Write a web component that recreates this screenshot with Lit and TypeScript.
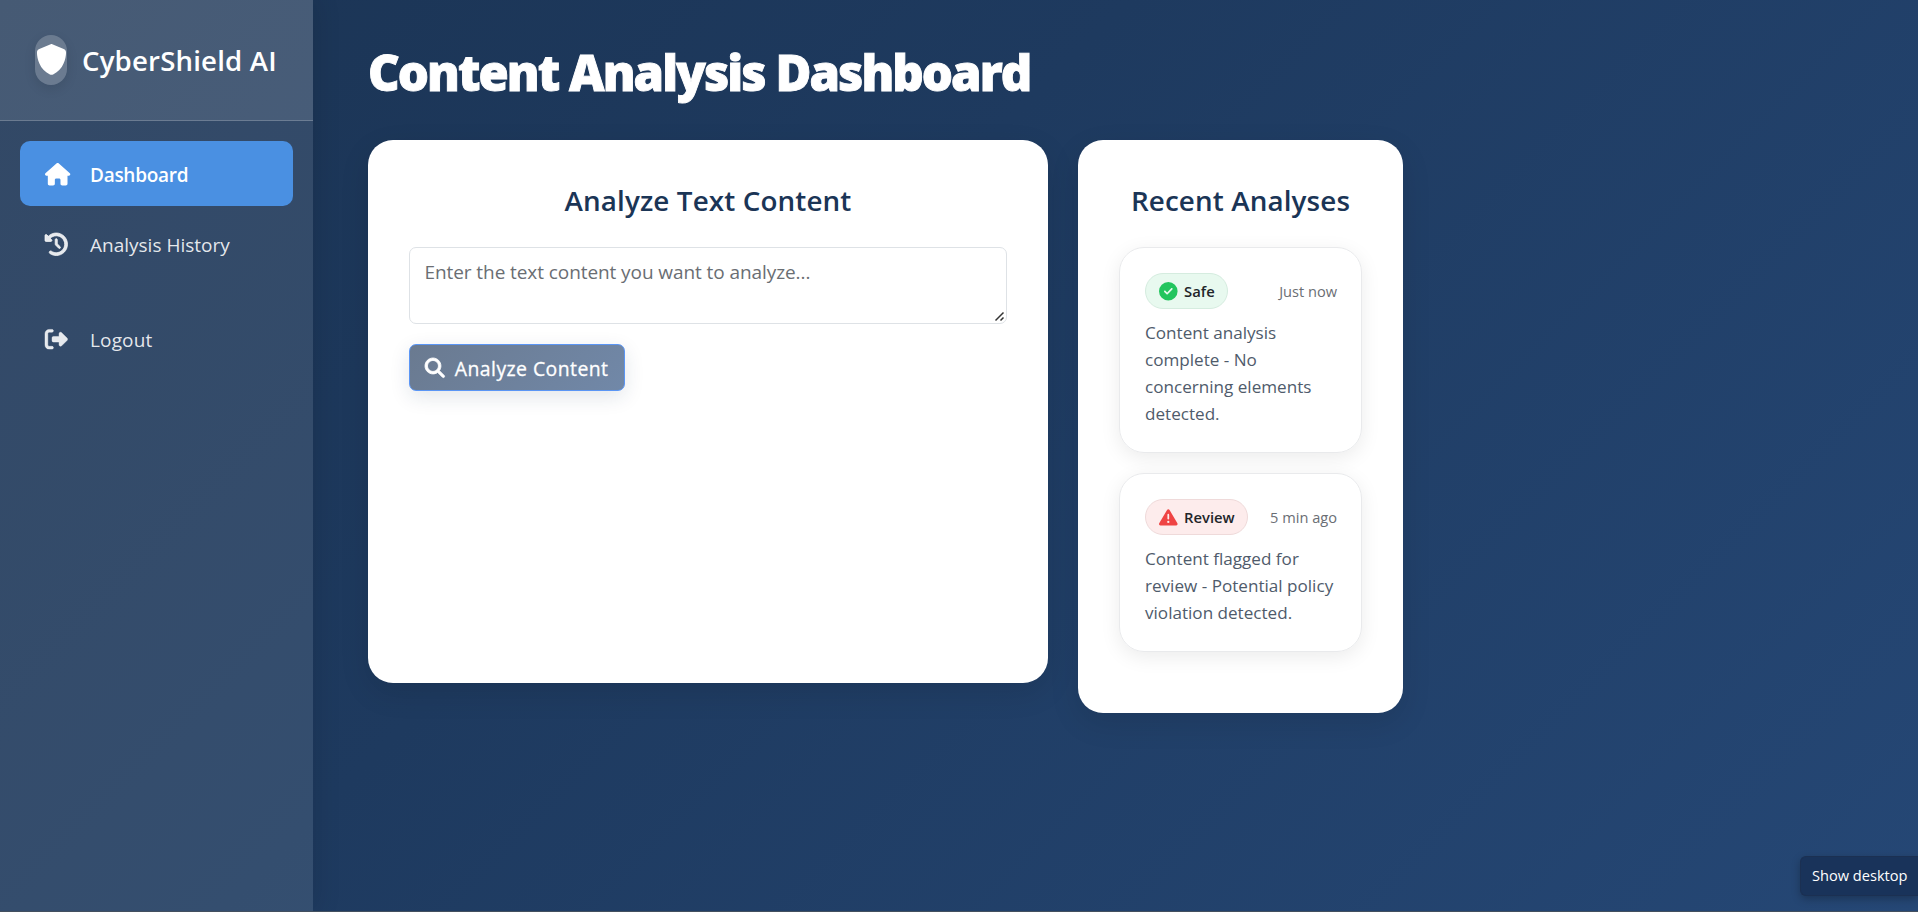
import { LitElement, html, css, svg } from "lit";
import { customElement, property } from "lit/decorators.js";

const ICONS: Record<string, { w: number; d: string; bold?: number }> = {
  shield: { w: 512, d: "M256 0c4.6 0 9.2 1 13.4 2.9L457.7 82.8c22 9.3 38.4 31 38.3 57.2c-.5 99.2-41.3 280.7-213.6 363.2c-16.7 8-36.1 8-52.8 0C57.3 420.7 16.5 239.2 16 140c-.1-26.2 16.3-47.9 38.3-57.2L242.7 2.9C246.8 1 251.4 0 256 0z" },
  home: { w: 576, d: "M575.8 255.5c0 18-15 32.1-32 32.1h-32l.7 160.2c0 2.7-.2 5.4-.5 8.1V472c0 22.1-17.9 40-40 40H456c-1.1 0-2.2 0-3.3-.1c-1.4 .1-2.8 .1-4.2 .1H416 392c-22.1 0-40-17.9-40-40V448 384c0-17.7-14.3-32-32-32H256c-17.7 0-32 14.3-32 32v64 24c0 22.1-17.9 40-40 40H160 128.1c-1.5 0-3-.1-4.5-.2c-1.2 .1-2.4 .2-3.6 .2H104c-22.1 0-40-17.9-40-40V360c0-.9 0-1.9 .1-2.8V287.6H32c-18 0-32-14-32-32.1c0-9 3-17 10-24L266.4 8c7-7 15-8 22-8s15 2 21 7L564.8 231.5c8 7 12 15 11 24z" },
  history: { w: 512, bold: 18, d: "M75 75L41 41C25.9 25.9 0 36.6 0 57.9V168c0 13.3 10.7 24 24 24H134.1c21.4 0 32.1-25.9 17-41l-30.8-30.8C155 85.5 203 64 256 64c106 0 192 86 192 192s-86 192-192 192c-40.8 0-78.6-12.7-109.7-34.4c-14.5-10.1-34.4-6.6-44.6 7.9s-6.6 34.4 7.9 44.6C151.2 495 201.7 512 256 512c141.4 0 256-114.6 256-256S397.4 0 256 0C185.3 0 121.3 28.7 75 75zm181 53c-13.3 0-24 10.7-24 24V256c0 6.4 2.5 12.5 7 17l72 72c9.4 9.4 24.6 9.4 33.9 0s9.4-24.6 0-33.9l-65-65V152c0-13.3-10.7-24-24-24z" },
  logout: { w: 512, bold: 10, d: "M377.9 105.9L500.7 228.7c7.2 7.2 11.3 17.1 11.3 27.3s-4.1 20.1-11.3 27.3L377.9 406.1c-6.4 6.4-15 9.9-24 9.9c-18.7 0-33.9-15.2-33.9-33.9l0-62.1-128 0c-17.7 0-32-14.3-32-32l0-64c0-17.7 14.3-32 32-32l128 0 0-62.1c0-18.7 15.2-33.9 33.9-33.9c9 0 17.6 3.6 24 9.9zM160 96L96 96c-17.7 0-32 14.3-32 32l0 256c0 17.7 14.3 32 32 32l64 0c17.7 0 32 14.3 32 32s-14.3 32-32 32l-64 0c-53 0-96-43-96-96L0 128C0 75 43 32 96 32l64 0c17.7 0 32 14.3 32 32s-14.3 32-32 32z" },
  search: { w: 512, bold: 22, d: "M416 208c0 45.9-14.9 88.3-40 122.7L502.6 457.4c12.5 12.5 12.5 32.8 0 45.3s-32.8 12.5-45.3 0L330.7 376c-34.4 25.2-76.8 40-122.7 40C93.1 416 0 322.9 0 208S93.1 0 208 0S416 93.1 416 208zM208 352a144 144 0 1 0 0-288 144 144 0 1 0 0 288z" },
  check: { w: 512, d: "M256 512A256 256 0 1 0 256 0a256 256 0 1 0 0 512zM369 209L241 337c-9.4 9.4-24.6 9.4-33.9 0l-64-64c-9.4-9.4-9.4-24.6 0-33.9s24.6-9.4 33.9 0l47 47L335 175c9.4-9.4 24.6-9.4 33.9 0s9.4 24.6 0 33.9z" },
  warning: { w: 512, d: "M256 32c14.2 0 27.3 7.5 34.5 19.8l216 368c7.3 12.4 7.3 27.7 .2 40.1S486.3 480 472 480H40c-14.3 0-27.6-7.7-34.7-20.1s-7-27.8 .2-40.1l216-368C228.7 39.5 241.8 32 256 32zm0 128c-13.3 0-24 10.7-24 24V296c0 13.3 10.7 24 24 24s24-10.7 24-24V184c0-13.3-10.7-24-24-24zm32 224a32 32 0 1 0 -64 0 32 32 0 1 0 64 0z" },
};

@customElement("fa-icon")
class FaIcon extends LitElement {
  @property() name = "home";
  static styles = css`
    :host { display: inline-flex; flex: none; }
    .glyph { height: 1em; width: auto; display: block; fill: currentColor; stroke: currentColor; overflow: visible; }
  `;
  render() {
    const i = ICONS[this.name];
    return html`<svg class="glyph" viewBox="0 0 ${i.w} 512">${svg`<path stroke-width=${i.bold ?? 0} d=${i.d}></path>`}</svg>`;
  }
}

@customElement("app-root")
class AppRoot extends LitElement {
  static styles = css`
    :host {
      display: block; height: 912px; box-sizing: border-box; overflow: hidden; position: relative;
      font-family: "Open Sans", "Noto Sans", sans-serif;
      background: linear-gradient(135deg, #1b3454 0%, #1e3a5f 40%, #254775 100%);
      border-bottom: 1px solid #43505f;
    }
    * { box-sizing: border-box; }
    h1, h2, p { margin: 0; }
    .layout { display: flex; height: 100%; }
    .sidebar {
      width: 313px; flex: none; color: #fff;
      background: rgba(255, 255, 255, 0.1);
      box-shadow: 4px 0 24px rgba(0, 0, 0, 0.1);
    }
    .brand {
      height: 121px; display: flex; align-items: center; padding: 0 0 1px 35px; gap: 15px;
      background: rgba(255, 255, 255, 0.1); border-bottom: 1px solid rgba(255, 255, 255, 0.2);
    }
    .crest {
      width: 32px; height: 50px; border-radius: 16px; display: flex; align-items: center; justify-content: center;
      background: rgba(255, 255, 255, 0.2); box-shadow: 0 4px 12px rgba(0, 0, 0, 0.1); font-size: 31px;
    }
    .brand-name { font-size: 27.6px; font-weight: 600; line-height: 40px; letter-spacing: 0.18px; white-space: nowrap; }
    .nav { padding: 20px; display: flex; flex-direction: column; gap: 5px; }
    .item { height: 65px; border-radius: 10px; display: flex; align-items: center; padding-left: 25px; color: rgba(255, 255, 255, 0.88); font-size: 19px; white-space: nowrap; }
    .label { padding-top: 2px; }
    .item.active { background: #4a90e2; color: #fff; font-weight: 600; letter-spacing: -0.28px; }
    .item.last { margin-top: 25px; letter-spacing: 0.15px; }
    .slot { width: 45px; display: flex; font-size: 22.5px; padding-top: 1px; }
    .main { flex: 1; padding: 45px 0 0 55px; min-width: 0; }
    .title { color: #fff; font-size: 49px; font-weight: 800; line-height: 54px; letter-spacing: -1.96px; -webkit-text-stroke: 0.9px #fff; white-space: nowrap; }
    .cards { display: flex; align-items: flex-start; gap: 30px; margin-top: 41px; }
    .card { background: #fff; border-radius: 25px; padding: 40px 41px; box-shadow: 0 10px 30px rgba(0, 0, 0, 0.1); }
    .analyze { width: 680px; height: 543px; }
    .recent { width: 325px; height: 573px; }
    .heading { color: #1b3556; font-size: 27.8px; font-weight: 600; line-height: 40px; letter-spacing: 0.12px; text-align: center; white-space: nowrap; }
    .field { display: flex; position: relative; margin-top: 27px; }
    .input {
      display: block; width: 598px; height: 77px; border: 1px solid #dee2e6; border-radius: 7px; letter-spacing: -0.08px;
      padding: 9px 14.5px; font: 19px/30px "Open Sans", sans-serif; background: #fff; outline: none; resize: none;
    }
    .input::placeholder { color: #6a6e73; opacity: 1; }
    .grip { position: absolute; right: 2px; bottom: 2px; width: 11px; height: 11px; stroke: #333; stroke-width: 1.5; fill: none; }
    .button {
      width: 216px; height: 47px; margin-top: 20px; border: 1px solid #5b96f5; border-radius: 7px; color: #fff;
      display: flex; align-items: center; gap: 10.2px; padding: 0 0 0 15px; letter-spacing: 0.45px;
      background: linear-gradient(135deg, #6a7a90, #7188a8); box-shadow: 0 6px 20px rgba(27, 53, 86, 0.12);
      font: 500 19.4px/30px "Open Sans", sans-serif; white-space: nowrap;
    }
    .button .label { -webkit-text-stroke: 0.3px #fff; }
    .button fa-icon { font-size: 19.6px; padding-top: 1px; }
    .list { display: flex; flex-direction: column; gap: 20px; margin-top: 27px; }
    .entry { border: 1px solid #e9eaec; border-radius: 25px; padding: 25px 24px 25px 25px; box-shadow: 0 5px 20px rgba(0, 0, 0, 0.08); }
    .row { display: flex; align-items: center; justify-content: space-between; }
    .badge {
      height: 36px; border-radius: 18px; display: flex; align-items: center; gap: 7px; padding: 0 12.5px;
      font-size: 14.8px; font-weight: 600; color: #212529; white-space: nowrap;
    }
    .badge fa-icon { font-size: 18.6px; }
    .badge.safe { background: #e8f9ef; border: 1px solid #d5ecdf; }
    .badge.review { background: #fdecec; border: 1px solid #efdada; }
    .safe fa-icon { color: #22c55e; }
    .review fa-icon { color: #ef4444; }
    .time { font-size: 14.6px; color: #6a6e74; white-space: nowrap; }
    .text { font-size: 17.1px; line-height: 27px; color: #4f5b6b; margin-top: 10px; white-space: nowrap; }
    .tip {
      position: absolute; right: 0; bottom: 15px; width: 118px; height: 40px; border-radius: 6px 0 0 6px; color: #fff;
      display: flex; align-items: center; padding: 0 0 2px 11px; font-size: 14.6px; white-space: nowrap;
      background: #19335a; border: 1px solid #1b3052; border-right: 0; box-shadow: 0 3px 8px rgba(0, 0, 0, 0.25);
    }
  `;
  render() {
    return html`
      <div class="layout">
        <aside class="sidebar">
          <div class="brand"><span class="crest"><fa-icon name="shield"></fa-icon></span><span class="brand-name">CyberShield AI</span></div>
          <nav class="nav">
            <a class="item active"><span class="slot"><fa-icon name="home"></fa-icon></span><span class="label">Dashboard</span></a>
            <a class="item"><span class="slot"><fa-icon name="history"></fa-icon></span><span class="label">Analysis History</span></a>
            <a class="item last"><span class="slot"><fa-icon name="logout"></fa-icon></span><span class="label">Logout</span></a>
          </nav>
        </aside>
        <main class="main">
          <h1 class="title">Content Analysis Dashboard</h1>
          <div class="cards">
            <section class="card analyze">
              <h2 class="heading">Analyze Text Content</h2>
              <div class="field">
                <textarea class="input" placeholder="Enter the text content you want to analyze..."></textarea>
                <svg class="grip" viewBox="0 0 11 11"><path d="M1.5 9.5L9.5 1.5M6.5 9.5L9.5 6.5"></path></svg>
              </div>
              <button class="button"><fa-icon name="search"></fa-icon><span class="label">Analyze Content</span></button>
            </section>
            <section class="card recent">
              <h2 class="heading">Recent Analyses</h2>
              <div class="list">
                <article class="entry">
                  <div class="row"><span class="badge safe"><fa-icon name="check"></fa-icon><span>Safe</span></span><span class="time">Just now</span></div>
                  <p class="text">Content analysis<br />complete - No<br />concerning elements<br />detected.</p>
                </article>
                <article class="entry">
                  <div class="row"><span class="badge review"><fa-icon name="warning"></fa-icon><span>Review</span></span><span class="time">5 min ago</span></div>
                  <p class="text">Content flagged for<br />review - Potential policy<br />violation detected.</p>
                </article>
              </div>
            </section>
          </div>
        </main>
      </div>
      <div class="tip"><span>Show desktop</span></div>
    `;
  }
}
